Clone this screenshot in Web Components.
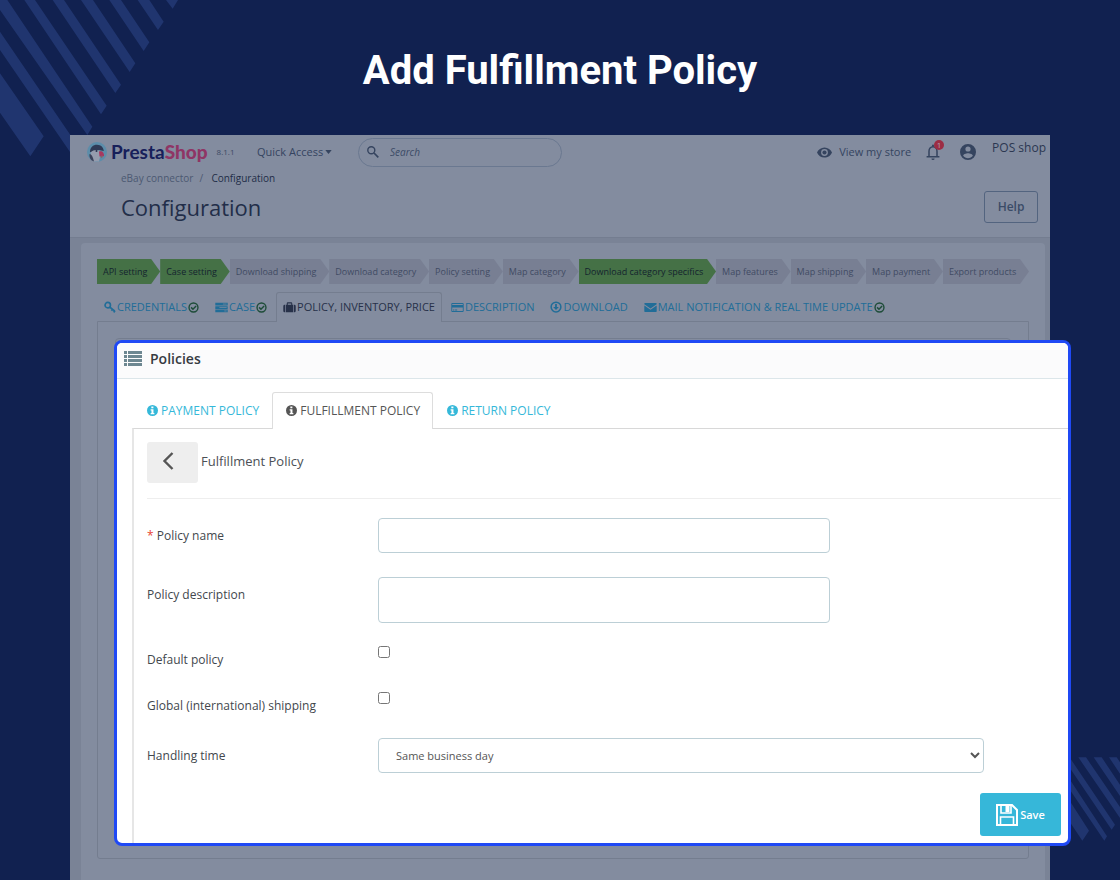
<!DOCTYPE html>
<html lang="en">
<head>
<meta charset="utf-8">
<title>Add Fulfillment Policy</title>
<style>
  body{margin:0;background:#112150;font-family:"Open Sans","Noto Sans",sans-serif}
</style>
</head>
<body>
<promo-stage>
  <span slot="title">Add Fulfillment Policy</span>
  <admin-page></admin-page>
  <policy-dialog slot="overlay"></policy-dialog>
</promo-stage>

<script>
(() => {
  const ICONS = {
    key: ['0 0 16 16', '<g fill="none" stroke="currentColor" stroke-width="2.200"><circle cx="5" cy="5.500" r="3.600"/><path d="M7.500 8l7 5.500M10 13l2-2.600M12.800 15.200l1.900-2.200"/></g>'],
    tasks: ['0 0 18 16', '<path d="M0 1h18v4H0zM0 6h18v4H0zM0 11h18v4H0z"/><path d="M11 3h5.500M6 8h10.500M13 13h3.500" stroke="#838c9f" stroke-width="1"/>'],
    suitcase: ['0 0 18 16', '<path d="M2.500 4v11H2a2 2 0 0 1-2-2V6a2 2 0 0 1 2-2zM15.500 4v11h.5a2 2 0 0 0 2-2V6a2 2 0 0 0-2-2z"/><path fill-rule="evenodd" d="M3.500 4H5V2a1.500 1.500 0 0 1 1.500-1.500h5A1.500 1.500 0 0 1 13 2v2h1.500v11h-11zM6.500 4h5V2h-5z"/>'],
    card: ['0 0 18 16', '<path fill-rule="evenodd" d="M1.500 1.500h15A1.500 1.500 0 0 1 18 3v10a1.500 1.500 0 0 1-1.500 1.500h-15A1.500 1.500 0 0 1 0 13V3a1.500 1.500 0 0 1 1.500-1.500zM1.300 2.800v1.700h15.400V2.800zM1.300 8v5.200h15.400V8zM2.500 11h2v1.300h-2zM5.500 11h3v1.300h-3z"/>'],
    down: ['0 0 16 16', '<circle cx="8" cy="8" r="6.500" fill="none" stroke="currentColor" stroke-width="2"/><path d="M6.800 4h2.400v4h2.600L8 12 4.200 8h2.600z"/>'],
    mail: ['0 0 18 16', '<path d="M1 1.500h16a1 1 0 0 1 1 1v.7L9 9.500 0 3.200v-.7a1 1 0 0 1 1-1zM0 5.200l9 6.200 9-6.200v8.300a1 1 0 0 1-1 1H1a1 1 0 0 1-1-1z"/>'],
    check: ['0 0 16 16', '<circle cx="8" cy="8" r="6.500" fill="none" stroke="currentColor" stroke-width="2"/><path d="M4.500 7.800l2.700 2.700 4.600-4.700" fill="none" stroke="currentColor" stroke-width="2.200"/>'],
    info: ['0 0 16 16', '<path fill-rule="evenodd" d="M8 0a8 8 0 1 1 0 16A8 8 0 0 1 8 0zM6.300 2.300v2.500h3V2.300zM5.300 6.200v1.700h1.200v3.700H5.300v1.700h5.400v-1.700H9.400V6.200z"/>'],
    list: ['0 0 18 15', '<path d="M0 0h3v3H0zM4 0h14v3H4zM0 4h3v3H0zM4 4h14v3H4zM0 8h3v3H0zM4 8h14v3H4zM0 12h3v3H0zM4 12h14v3H4z"/>'],
    search: ['0 0 12 12', '<circle cx="4.300" cy="4.300" r="3.500" fill="none" stroke="currentColor" stroke-width="1.400"/><path d="M7 7l4.300 4.300" stroke="currentColor" stroke-width="1.700"/>'],
    eye: ['0 0 22 15', '<path fill-rule="evenodd" d="M11 0c5 0 9.300 3.100 11 7.500C20.300 11.900 16 15 11 15S1.700 11.900 0 7.500C1.700 3.100 6 0 11 0zM11 2.500a5 5 0 1 0 0 10 5 5 0 0 0 0-10z"/><circle cx="11" cy="7.500" r="3"/>'],
    bell: ['0 0 16 20', '<path d="M3 15.500V9c0-3 2-5.500 5-5.500s5 2.500 5 5.500v6.500M0 16h16" fill="none" stroke="currentColor" stroke-width="1.900"/><path d="M6.800 3V1.700a1.200 1.200 0 0 1 2.400 0V3zM6 18h4a2 2 0 0 1-4 0z"/>'],
    user: ['0 0 20 20', '<path fill-rule="evenodd" d="M10 0a10 10 0 1 1 0 20 10 10 0 0 1 0-20zM10 3a3 3 0 1 0 0 6.500A3 3 0 0 0 10 3zM10 11.500c-2.500 0-6 1.300-6 3.100a7.200 7.200 0 0 0 12 0c0-1.800-3.500-3.100-6-3.100z"/>'],
    caret: ['0 0 8 5', '<path d="M0 0h8L4 5z"/>'],
    back: ['0 0 12 18', '<path d="M10.500 1L2.500 9l8 8" fill="none" stroke="currentColor" stroke-width="2.400"/>'],
    save: ['0 0 22 22', '<path d="M1 1h15l5 5v15H1z" fill="none" stroke="currentColor" stroke-width="2"/><path d="M5 1v8h10V1M4.500 21v-8h13v8" fill="none" stroke="currentColor" stroke-width="1.600"/><path d="M9.500 2h4v6h-4z"/>'],
    puffin: ['0 0 20 20', '<circle cx="10" cy="10" r="10" fill="#5c8daa"/><path d="M3 10c0-4.500 3-7.200 7-7.200s6.500 2.800 6.800 6.200L12 8l-6 2z" fill="#2f3a56"/><path d="M4 10c2-2 5-2.700 8-1.500 2 .8 2 4 1 6.500l-1 4.500H6.500C4 17.500 3 13 4 10z" fill="#959cae"/><path d="M2.500 12c2 0 3.500 3 4.500 7.500C4 18.500 2 16 2.500 12z" fill="#3a415a"/><circle cx="9.500" cy="9" r="1" fill="#27304e"/><path d="M12 9.500c3-1 5.500 1 5 5-1-1-2.500-1.200-4.500 0z" fill="#a8375f"/><path d="M12.800 14.500l3.200-.8-1 2.300z" fill="#8f5a60"/>']
  };

  const element = (name, html) => {
    const template = document.createElement('template');
    template.innerHTML = html;
    customElements.define(name, class extends HTMLElement {
      connectedCallback() {
        if (this.shadowRoot) return;
        this.attachShadow({mode: 'open'}).append(template.content.cloneNode(true));
      }
    });
  };

  class UiIcon extends HTMLElement {
    connectedCallback() {
      if (this.shadowRoot) return;
      const [box, shape] = ICONS[this.getAttribute('name')];
      this.attachShadow({mode: 'open'}).innerHTML = `
        <style>
          :host{display:inline-block;width:12px;height:12px;flex:none}
          svg{display:block;width:100%;height:100%;fill:currentColor}
        </style>
        <svg viewBox="${box}" aria-hidden="true">${shape}</svg>`;
    }
  }
  customElements.define('ui-icon', UiIcon);

  element('promo-stage', `
    <style>
      :host{position:relative;display:flex;flex-direction:column;min-height:100vh;overflow:hidden;background:#112150}
      .stripes{position:absolute;fill:#20356f}
      .top{left:0;top:0;width:180px;height:160px}
      .bottom{right:0;bottom:39px;width:50px;height:84px}
      h1{position:relative;margin:0;padding:47px 20px 40px;color:#fff;font:700 40px/48px Roboto,sans-serif;text-align:center}
      main{position:relative;display:flex;flex:1;margin:0 70px}
      ::slotted(admin-page){flex:1;min-width:0}
      ::slotted(policy-dialog){position:absolute;top:205px;left:44px;right:-21px}
    </style>
    <svg class="stripes top" viewBox="0 0 540 480" aria-hidden="true">
      <path d="M0 220L131 409 91 469 0 338zM0 95L225 425V478L0 150zM0 0H22L277 380 262 405 0 30zM73 0H105L320 317 303 343zM158 0H192L363 254 346 279zM243 0H279L406 190 389 216zM328 0H363L448 127 431 153zM413 0H448L491 65 474 90zM498 0H534L518 26z"/>
    </svg>
    <svg class="stripes bottom" viewBox="420 112 150 252" aria-hidden="true">
      <path d="M420 245L477 333 457 363 420 308zM420 180L531 350 523 363 420 211zM420 115L555 315 545 330 420 146zM445 113H468L570 262V295zM491 113H515L570 195V229zM537 113H560L570 128V162z"/>
    </svg>
    <h1><slot name="title"></slot></h1>
    <main><slot></slot><slot name="overlay"></slot></main>`);

  element('admin-header', `
    <style>
      :host{display:block;height:102px;border-bottom:1px solid #747d90;background:#838c9f;color:#35445f}
      .bar,.brand,.bar a,.crumbs,.title{display:flex;align-items:center}
      .bar{height:34px;padding:0 4px 0 17px}
      .brand{width:170px;gap:4px;color:#17205a;font:700 19px/24px Lato,sans-serif}
      .brand ui-icon{width:20px;height:20px}
      .brand b{color:#8f3565}
      .brand small{margin-left:5px;color:#3b4963;font:8px/12px "Open Sans",sans-serif}
      button{border:0;padding:0;background:none;color:inherit;font:11px/16px "Open Sans",sans-serif}
      .quick{display:flex;width:101px;align-items:center;gap:2px}
      .quick ui-icon{width:7px;height:4px}
      label{display:flex;width:204px;height:29px;box-sizing:border-box;align-items:center;gap:11px;padding:0 8px;border:1px solid #6a7890;border-radius:15px}
      input{width:100%;min-width:0;padding:0;border:0;outline:0;background:none;font:italic 10px/16px "Open Sans",sans-serif}
      input::placeholder{color:#3c4b66;opacity:1}
      .right{display:flex;margin-left:auto;align-items:center}
      a{color:inherit;text-decoration:none}
      .store{gap:7px;margin-right:15px;font-size:11px;line-height:16px}
      .store ui-icon{width:15px;height:11px}
      .bell{position:relative;display:flex;width:14px;margin-right:20px}
      .bell ui-icon{width:14px;height:16px}
      .bell i{position:absolute;top:-4px;right:-4px;width:10px;height:10px;border-radius:5px;background:#9c2d44;color:#b3a0b0;font:8px/10px "Open Sans",sans-serif;text-align:center}
      .user{width:16px;height:16px;margin-right:16px}
      .shop{align-self:flex-start;color:#2b3751;font-size:12px;line-height:26px}
      .crumbs{height:19px;padding-left:51px;gap:6px;font-size:10px;line-height:19px;color:#4c5972}
      .crumbs b{color:#1f2c48;font-weight:400}
      .crumbs i{width:6px;font-style:normal}
      .title{justify-content:space-between;height:38px;padding:0 12px 0 51px}
      h2{margin:0;color:#222e49;font-size:22px;font-weight:400;line-height:30px}
      .help{width:54px;height:32px;border:1px solid #53647f;border-radius:3px;color:#3a4b67;font-size:12px;font-weight:600}
    </style>
    <header>
      <div class="bar">
        <div class="brand"><ui-icon name="puffin"></ui-icon><span>Presta<b>Shop</b></span><small>8.1.1</small></div>
        <button class="quick" type="button">Quick Access <ui-icon name="caret"></ui-icon></button>
        <label><ui-icon name="search"></ui-icon><input type="search" placeholder="Search" aria-label="Search"></label>
        <div class="right">
          <a class="store" href="#store"><ui-icon name="eye"></ui-icon>View my store</a>
          <a class="bell" href="#notifications"><ui-icon name="bell"></ui-icon><i>1</i></a>
          <ui-icon class="user" name="user"></ui-icon>
        </div>
        <span class="shop">POS shop</span>
      </div>
      <nav class="crumbs"><a href="#ebay">eBay connector</a><i>/</i><b>Configuration</b></nav>
      <div class="title"><h2>Configuration</h2><button class="help" type="button">Help</button></div>
    </header>`);

  element('wizard-step', `
    <style>
      :host{display:block;flex:1 0 auto;height:25px;padding:0 10px 0 6px;background:#787f93;color:#414b63;font-size:9px;line-height:25px;white-space:nowrap;clip-path:polygon(0 0,calc(100% - 9px) 0,100% 50%,calc(100% - 9px) 100%,0 100%)}
      :host([done]){background:#457146;color:#14242e}
    </style>
    <slot></slot>`);

  element('tab-link', `
    <style>
      :host{display:block;box-sizing:border-box;height:29px;margin-right:2px;border:1px solid transparent;border-bottom:0;color:#216d98;font-size:11px;line-height:28px;white-space:nowrap}
      :host([large]){height:36px;margin-right:0;color:#35b8d9;font-size:12px;line-height:35px}
      a{display:flex;align-items:center;gap:1px;padding:0 6px;color:inherit;text-decoration:none}
      :host([large]) a{gap:3px;padding:0 12px 0 13px}
      :host([active]){position:relative;height:30px;margin-bottom:-1px;border-color:#747d8f;border-radius:3px 3px 0 0;background:#838c9f;color:#273149}
      :host([large][active]){height:37px;border-color:#ddd;background:#fff;color:#555}
    </style>
    <a href="#tab"><slot></slot></a>`);

  element('admin-page', `
    <style>
      :host{display:flex;flex-direction:column;background:#7a8396}
      .panel{display:flex;flex:1;flex-direction:column;margin:5px 5px 0 11px;padding:16px 16px 21px;border-radius:4px 4px 0 0;background:#838c9f}
      .steps,.tabs{display:flex}
      .tabs{margin-top:8px;align-items:flex-end}
      .tabs ui-icon[name=check]{width:11px;height:11px;color:#1d4c38}
      .tabs .wide{width:13px;height:11px}
      .body{flex:1;box-sizing:border-box;padding:16px 17px 0;border:1px solid #747d8f;border-radius:0 0 3px 3px}
      .card{height:80px;border:1px solid #747d8f;border-radius:4px}
    </style>
    <admin-header></admin-header>
    <section class="panel">
      <div class="steps">
        <wizard-step done>API setting</wizard-step>
        <wizard-step done>Case setting</wizard-step>
        <wizard-step>Download shipping</wizard-step>
        <wizard-step>Download category</wizard-step>
        <wizard-step>Policy setting</wizard-step>
        <wizard-step>Map category</wizard-step>
        <wizard-step done>Download category specifics</wizard-step>
        <wizard-step>Map features</wizard-step>
        <wizard-step>Map shipping</wizard-step>
        <wizard-step>Map payment</wizard-step>
        <wizard-step>Export products</wizard-step>
      </div>
      <nav class="tabs">
        <tab-link><ui-icon name="key"></ui-icon>CREDENTIALS<ui-icon name="check"></ui-icon></tab-link>
        <tab-link><ui-icon class="wide" name="tasks"></ui-icon>CASE<ui-icon name="check"></ui-icon></tab-link>
        <tab-link active><ui-icon class="wide" name="suitcase"></ui-icon>POLICY, INVENTORY, PRICE</tab-link>
        <tab-link><ui-icon class="wide" name="card"></ui-icon>DESCRIPTION</tab-link>
        <tab-link><ui-icon name="down"></ui-icon>DOWNLOAD</tab-link>
        <tab-link><ui-icon class="wide" name="mail"></ui-icon>MAIL NOTIFICATION &amp; REAL TIME UPDATE<ui-icon name="check"></ui-icon></tab-link>
      </nav>
      <div class="body"><div class="card"></div></div>
    </section>`);

  element('form-row', `
    <style>
      :host{display:grid;grid-template-columns:231px minmax(0,1fr);align-items:center}
      :host([raised]){align-items:start}
    </style>
    <slot></slot>`);

  element('policy-dialog', `
    <style>
      :host{display:block;box-sizing:border-box;overflow:hidden;border:3px solid #1f49f5;border-radius:8px;background:#fff;color:#4c5056}
      header{display:flex;height:31px;align-items:center;gap:8px;padding:0 0 4px 7px;border-bottom:1px solid #dce6ea;background:#fbfbfc}
      header ui-icon{width:18px;height:15px;color:#6d8791}
      h2{margin:0;color:#363a41;font-size:14px;font-weight:600;line-height:20px}
      .tabs{display:flex;margin:13px 0 0 16px;align-items:flex-end}
      .tabs ui-icon{width:11px;height:11px}
      .body{margin-left:15px;padding:13px 7px 7px 13px;border:solid #e6e6e6;border-width:1px 0 0 2px;border-top-color:#d8d8d8}
      .top{display:flex;height:41px;align-items:center;gap:3px;padding-bottom:15px;border-bottom:1px solid #eee;font-size:13px}
      .top span{padding-bottom:4px}
      .back{width:51px;height:41px;padding:0 10px 4px 0;border:0;border-radius:3px;background:#eee;color:#555}
      .back ui-icon{width:12px;height:18px;vertical-align:middle}
      form{display:flex;flex-direction:column;padding-top:19px}
      label{font-size:12px;line-height:20px;color:#42474d}
      label b{color:#e8442f;font-weight:400}
      input,textarea,select{box-sizing:border-box;margin:0;background:#fff;color:#555;font:11px/16px "Open Sans",sans-serif}
      .text,textarea,select{width:100%;height:35px;border:1px solid #bccfd6;border-radius:4px}
      .text,textarea{max-width:452px}
      textarea{display:block;height:46px;resize:none}
      select{max-width:606px;padding:0 2px 0 13px}
      [type=checkbox]{width:12px;height:12px}
      form-row + form-row{margin-top:24px}
      .desc label{padding-top:8px}
      .tick label{padding-top:4px}
      form-row.desc + form-row.tick{margin-top:23px}
      form-row.tick + form-row{margin-top:22px}
      .save{display:flex;align-self:flex-end;width:81px;height:43px;align-items:center;justify-content:center;gap:2px;margin-top:20px;padding:0;border:0;border-radius:3px;background:#36b7d9;color:#fff;font:600 11px/16px "Open Sans",sans-serif}
      .save ui-icon{width:22px;height:22px}
    </style>
    <header><ui-icon name="list"></ui-icon><h2>Policies</h2></header>
    <nav class="tabs">
      <tab-link large><ui-icon name="info"></ui-icon>PAYMENT POLICY</tab-link>
      <tab-link large active><ui-icon name="info"></ui-icon>FULFILLMENT POLICY</tab-link>
      <tab-link large><ui-icon name="info"></ui-icon>RETURN POLICY</tab-link>
    </nav>
    <div class="body">
      <div class="top"><button class="back" type="button" aria-label="Back"><ui-icon name="back"></ui-icon></button><span>Fulfillment Policy</span></div>
      <form>
        <form-row><label for="name"><b>*</b> Policy name</label><input class="text" id="name" type="text"></form-row>
        <form-row class="desc" raised><label for="desc">Policy description</label><textarea id="desc"></textarea></form-row>
        <form-row class="tick" raised><label for="default">Default policy</label><input id="default" type="checkbox"></form-row>
        <form-row class="tick" raised><label for="global">Global (international) shipping</label><input id="global" type="checkbox"></form-row>
        <form-row><label for="time">Handling time</label><select id="time"><option>Same business day</option></select></form-row>
        <button class="save" type="button"><ui-icon name="save"></ui-icon>Save</button>
      </form>
    </div>`);
})();
</script>
</body>
</html>
